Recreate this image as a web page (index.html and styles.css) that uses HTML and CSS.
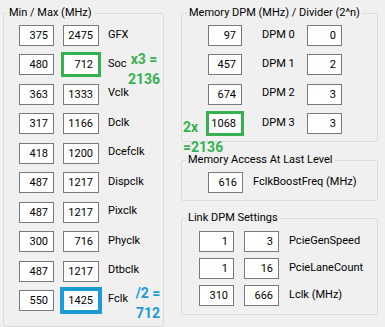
FILE: index.html
```html
<!DOCTYPE html>
<html lang="en">
<head>
  <meta charset="UTF-8" />
  <title>SMU Clock Table</title>
  <link rel="stylesheet" href="styles.css">
</head>
<body>
  <div class="dialog">
    <fieldset class="group clocks">
      <legend>Min / Max (MHz)</legend>
      <div class="clock-grid">
        <input class="edit" value="375" readonly><input class="edit" value="2475" readonly><span class="lbl">GFX</span>
        <input class="edit" value="480" readonly><input class="edit hl-green" value="712" readonly><span class="lbl">Soc</span>
        <input class="edit" value="363" readonly><input class="edit" value="1333" readonly><span class="lbl">Vclk</span>
        <input class="edit" value="317" readonly><input class="edit" value="1166" readonly><span class="lbl">Dclk</span>
        <input class="edit" value="418" readonly><input class="edit" value="1200" readonly><span class="lbl">Dcefclk</span>
        <input class="edit" value="487" readonly><input class="edit" value="1217" readonly><span class="lbl">Dispclk</span>
        <input class="edit" value="487" readonly><input class="edit" value="1217" readonly><span class="lbl">Pixclk</span>
        <input class="edit" value="300" readonly><input class="edit" value="716" readonly><span class="lbl">Phyclk</span>
        <input class="edit" value="487" readonly><input class="edit" value="1217" readonly><span class="lbl">Dtbclk</span>
        <input class="edit" value="550" readonly><input class="edit hl-blue" value="1425" readonly><span class="lbl">Fclk</span>
      </div>
    </fieldset>

    <div class="side">
      <fieldset class="group dpm">
        <legend>Memory DPM (MHz) / Divider (2^n)</legend>
        <div class="dpm-grid">
          <input class="edit" value="97" readonly><span class="lbl">DPM 0</span><input class="edit" value="0" readonly>
          <input class="edit" value="457" readonly><span class="lbl">DPM 1</span><input class="edit" value="2" readonly>
          <input class="edit" value="674" readonly><span class="lbl">DPM 2</span><input class="edit" value="3" readonly>
          <input class="edit hl-green" value="1068" readonly><span class="lbl">DPM 3</span><input class="edit" value="3" readonly>
        </div>
      </fieldset>

      <fieldset class="group access">
        <legend>Memory Access At Last Level</legend>
        <div class="access-row">
          <input class="edit" value="616" readonly><span class="lbl">FclkBoostFreq (MHz)</span>
        </div>
      </fieldset>

      <fieldset class="group link">
        <legend>Link DPM Settings</legend>
        <div class="link-grid">
          <input class="edit" value="1" readonly><input class="edit" value="3" readonly><span class="lbl">PcieGenSpeed</span>
          <input class="edit" value="1" readonly><input class="edit" value="16" readonly><span class="lbl">PcieLaneCount</span>
          <input class="edit" value="310" readonly><input class="edit" value="666" readonly><span class="lbl">Lclk (MHz)</span>
        </div>
      </fieldset>
    </div>

    <!-- hand-written notes on top of the screenshot -->
    <div class="note green note-soc">x3 =<br>2136</div>
    <div class="note green note-dram">2x<br>=2136</div>
    <div class="note blue note-fclk">/2 =<br>712</div>
  </div>
</body>
</html>
```

FILE: styles.css
```css
* {
  box-sizing: border-box;
}
body {
  margin: 0;
  background: #f0f0f0;
  font-family: Roboto, 'Liberation Sans', sans-serif;
  font-size: 11px;
  color: #000;
}
.dialog {
  position: relative;
  display: flex;
  gap: 17px;
  padding: 6px 0 0 3px;
  width: 385px;
  height: 327px;
}
.group {
  margin: 0;
  min-width: 0;
  border: 1px solid #dcdcdc;
  border-radius: 2px;
}
.group legend {
  padding: 0 2px;
  line-height: 14px;
}
.edit {
  width: 100%;
  height: 21px;
  margin: 0;
  padding: 0 5px 0 0;
  border: 1px solid #7a7a7a;
  background: #fff;
  font: inherit;
  color: #000;
  text-align: right;
  outline: none;
}
.lbl {
  white-space: nowrap;
  padding-bottom: 3px;
}
.hl-green {
  outline: 3px solid #35b152;
  outline-offset: -1px;
}
.hl-blue {
  outline: 4px solid #1b9ad6;
  outline-offset: -1px;
}

/* left: min / max clocks */
.clocks {
  width: 161px;
  padding: 5px 6px 9px 15px;
}
.clocks legend {
  margin-left: -12px;
}
.clock-grid {
  display: grid;
  grid-template-columns: 35px 36px auto;
  grid-auto-rows: 21px;
  column-gap: 9px;
  row-gap: 8.44px;
  align-items: center;
}

/* right column */
.side {
  display: flex;
  flex-direction: column;
  width: 197px;
}
.dpm {
  padding: 5px 8px 7px 26px;
}
.dpm legend {
  margin-left: -21px;
}
.dpm-grid {
  display: grid;
  grid-template-columns: 34px 65px 35px;
  grid-auto-rows: 21px;
  row-gap: 8.44px;
  align-items: center;
}
.dpm-grid .lbl {
  padding-left: 20px;
}
.access {
  margin-top: 11px;
  padding: 5px 8px 7px 26px;
}
.access legend {
  margin-left: -22px;
}
.access-row {
  display: flex;
  align-items: center;
  gap: 10px;
}
.access-row .edit {
  width: 35px;
}
.link {
  margin-top: 10px;
  padding: 6px 8px 8px 17px;
}
.link legend {
  margin-left: -13px;
}
.link-grid {
  display: grid;
  grid-template-columns: 35px 35px auto;
  grid-auto-rows: 21px;
  column-gap: 10px;
  row-gap: 6px;
  align-items: center;
}

/* annotations */
.note {
  position: absolute;
  font-size: 14px;
  font-weight: bold;
  line-height: 20px;
}
.green {
  color: #35b152;
}
.blue {
  color: #1b9ad6;
}
.note-soc {
  left: 125px;
  top: 49px;
  width: 38px;
  text-align: center;
}
.note-fclk {
  left: 130px;
  top: 283px;
  width: 36px;
  text-align: center;
}
.note-dram {
  left: 183px;
  top: 117px;
}
```
